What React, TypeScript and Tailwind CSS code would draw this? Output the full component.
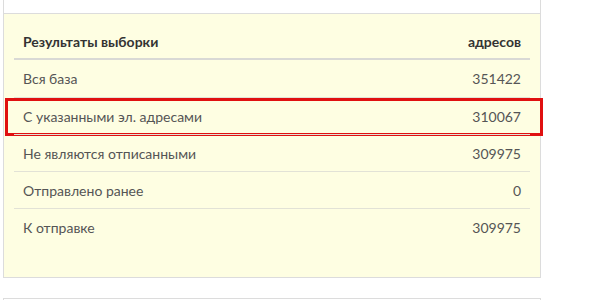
import React from "react";

const rows: { label: string; value: string; marked?: boolean }[] = [
  { label: "Вся база", value: "351422" },
  { label: "С указанными эл. адресами", value: "310067", marked: true },
  { label: "Не являются отписанными", value: "309975" },
  { label: "Отправлено ранее", value: "0" },
  { label: "К отправке", value: "309975" },
];

export default function App() {
  return (
    <div
      className="w-[591px] h-[300px] overflow-hidden bg-white pl-[3px]"
      style={{ fontFamily: 'Lato, "Open Sans", "Liberation Sans", sans-serif' }}
    >
      <div className="w-[538px] flex flex-col">
        {/* previous card, scrolled mostly out of view */}
        <div className="h-[14px] bg-white border-x border-b border-[#dcdcdc]" />

        {/* selection results panel */}
        <div className="relative bg-[#fefee2] border-x border-b border-[#dcdcdc] px-[10px] pt-[10px] pb-[32px]">
          <div className="flex items-center justify-between h-[36px] px-[9px] border-b-2 border-[#d9d9d5] text-[14px] font-bold text-[#333]">
            <span>Результаты выборки</span>
            <span>адресов</span>
          </div>
          {rows.map((r, i) => (
            <div
              key={r.label}
              className={`relative flex items-center justify-between h-[37px] px-[9px] text-[14px] text-[#555] ${
                i === 0 ? "" : "border-t border-[#e2e2d6]"
              }`}
            >
              <span>{r.label}</span>
              <span>{r.value}</span>
              {r.marked && (
                <div className="absolute left-[-9px] right-[-13px] top-[0px] bottom-[-2px] border-[3px] border-[#e01010] pointer-events-none" />
              )}
            </div>
          ))}
        </div>

        {/* next card */}
        <div className="mt-[20px] h-[40px] bg-white border border-[#dcdcdc]" />
      </div>
    </div>
  );
}
